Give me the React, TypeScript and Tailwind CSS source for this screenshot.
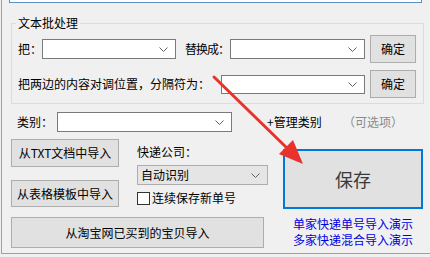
const font = { fontFamily: '"Noto Sans CJK SC", "Noto Sans", sans-serif' };

const Chevron = () => (
  <svg width="9" height="5" viewBox="0 0 9 5" className="shrink-0">
    <path d="M0.5 0.5 L4.5 4.5 L8.5 0.5" fill="none" stroke="#606060" strokeWidth="1" />
  </svg>
);

const Combo = ({ className }: { className: string }) => (
  <div className={`flex shrink-0 items-center justify-end border border-[#7a7a7a] bg-white pr-[7px] ${className}`}>
    <Chevron />
  </div>
);

const Btn = ({ label, className }: { label: string; className: string }) => (
  <button className={`flex shrink-0 items-center justify-center whitespace-nowrap border border-[#adadad] bg-[#e1e1e1] text-[12px] leading-[14px] text-black ${className}`}>
    {label}
  </button>
);

export default function App() {
  return (
    <div className="relative h-[257px] w-[430px] overflow-hidden bg-[#f0f0f0] text-[12px] leading-[14px] text-black" style={font}>
      <div className="ml-[1px] h-[254px] border-b border-l border-[#a0a0a0]">
        {/* textbox scrolled off the top */}
        <div className="ml-[7px] h-[3px] w-[413px] border-x border-b border-[#5a8fc0] bg-white" />

        {/* 文本批处理 group */}
        <div className="relative ml-[9px] mt-[20px] h-[81px] w-[413px] border border-[#dcdcdc]">
          <span className="absolute left-[4px] top-[-8px] bg-[#f0f0f0] px-[2px]">文本批处理</span>

          <div className="mt-[11px] flex h-[28px] items-center pl-[6px]">
            <span className="w-[24px] shrink-0">把：</span>
            <Combo className="h-[20px] w-[134px]" />
            <span className="ml-[9px] w-[45px] shrink-0 whitespace-nowrap tracking-[-1px]">替换成：</span>
            <Combo className="h-[20px] w-[135px]" />
            <Btn label="确定" className="ml-[5px] h-[28px] w-[46px]" />
          </div>

          <div className="mt-[7px] flex h-[28px] items-center pl-[6px]">
            <span className="w-[203px] shrink-0 whitespace-nowrap">把两边的内容对调位置，分隔符为：</span>
            <Combo className="h-[19px] w-[144px]" />
            <Btn label="确定" className="ml-[5px] h-[28px] w-[46px]" />
          </div>
        </div>

        {/* 类别 row */}
        <div className="mt-[8px] flex h-[20px] items-center pl-[15px]">
          <span className="w-[40px] shrink-0">类别：</span>
          <Combo className="h-[20px] w-[175px]" />
          <span className="ml-[35px] w-[76px] shrink-0 whitespace-nowrap">+管理类别</span>
          <span className="whitespace-nowrap text-[#8a8a8a]">（可选项）</span>
        </div>

        <div className="flex">
          <div className="ml-[9px] flex w-[253px] flex-col">
            <div className="flex">
              <div className="flex flex-col">
                <Btn label="从TXT文档中导入" className="mt-[7px] h-[28px] w-[108px]" />
                <Btn label="从表格模板中导入" className="mt-[13px] h-[27px] w-[108px]" />
              </div>
              <div className="ml-[18px] flex flex-col">
                <span className="mt-[13px]">快递公司：</span>
                <div className="mt-[6px] flex h-[20px] w-[131px] items-center justify-between border border-[#adadad] bg-[#e5e5e5] pl-[3px] pr-[7px]">
                  <span>自动识别</span>
                  <Chevron />
                </div>
                <div className="mt-[6px] flex items-center">
                  <span className="h-[13px] w-[13px] border border-[#333333] bg-white" />
                  <span className="ml-[2px] whitespace-nowrap">连续保存新单号</span>
                </div>
              </div>
            </div>
            <Btn label="从淘宝网已买到的宝贝导入" className="mt-[10px] h-[31px] w-[253px]" />
          </div>

          <div className="ml-[19px] flex flex-col items-center">
            <button className="mt-[17px] flex h-[60px] w-[140px] items-center justify-center border-2 border-[#0078d7] bg-[#e1e1e1] text-[18px] text-[#3a3a3a]">
              保存
            </button>
            <span className="mt-[7px] block leading-[16px] text-[#0000e0]">单家快递单号导入演示</span>
            <span className="block leading-[16px] text-[#0000e0]">多家快递混合导入演示</span>
          </div>
        </div>
      </div>

      {/* red arrow annotation */}
      <svg className="pointer-events-none absolute left-0 top-0" width="430" height="257">
        <line x1="214" y1="77" x2="288" y2="149" stroke="#e8322c" strokeWidth="3" strokeLinecap="round" />
        <polygon points="303,164 279,154 293,140" fill="#e8322c" />
      </svg>
    </div>
  );
}
